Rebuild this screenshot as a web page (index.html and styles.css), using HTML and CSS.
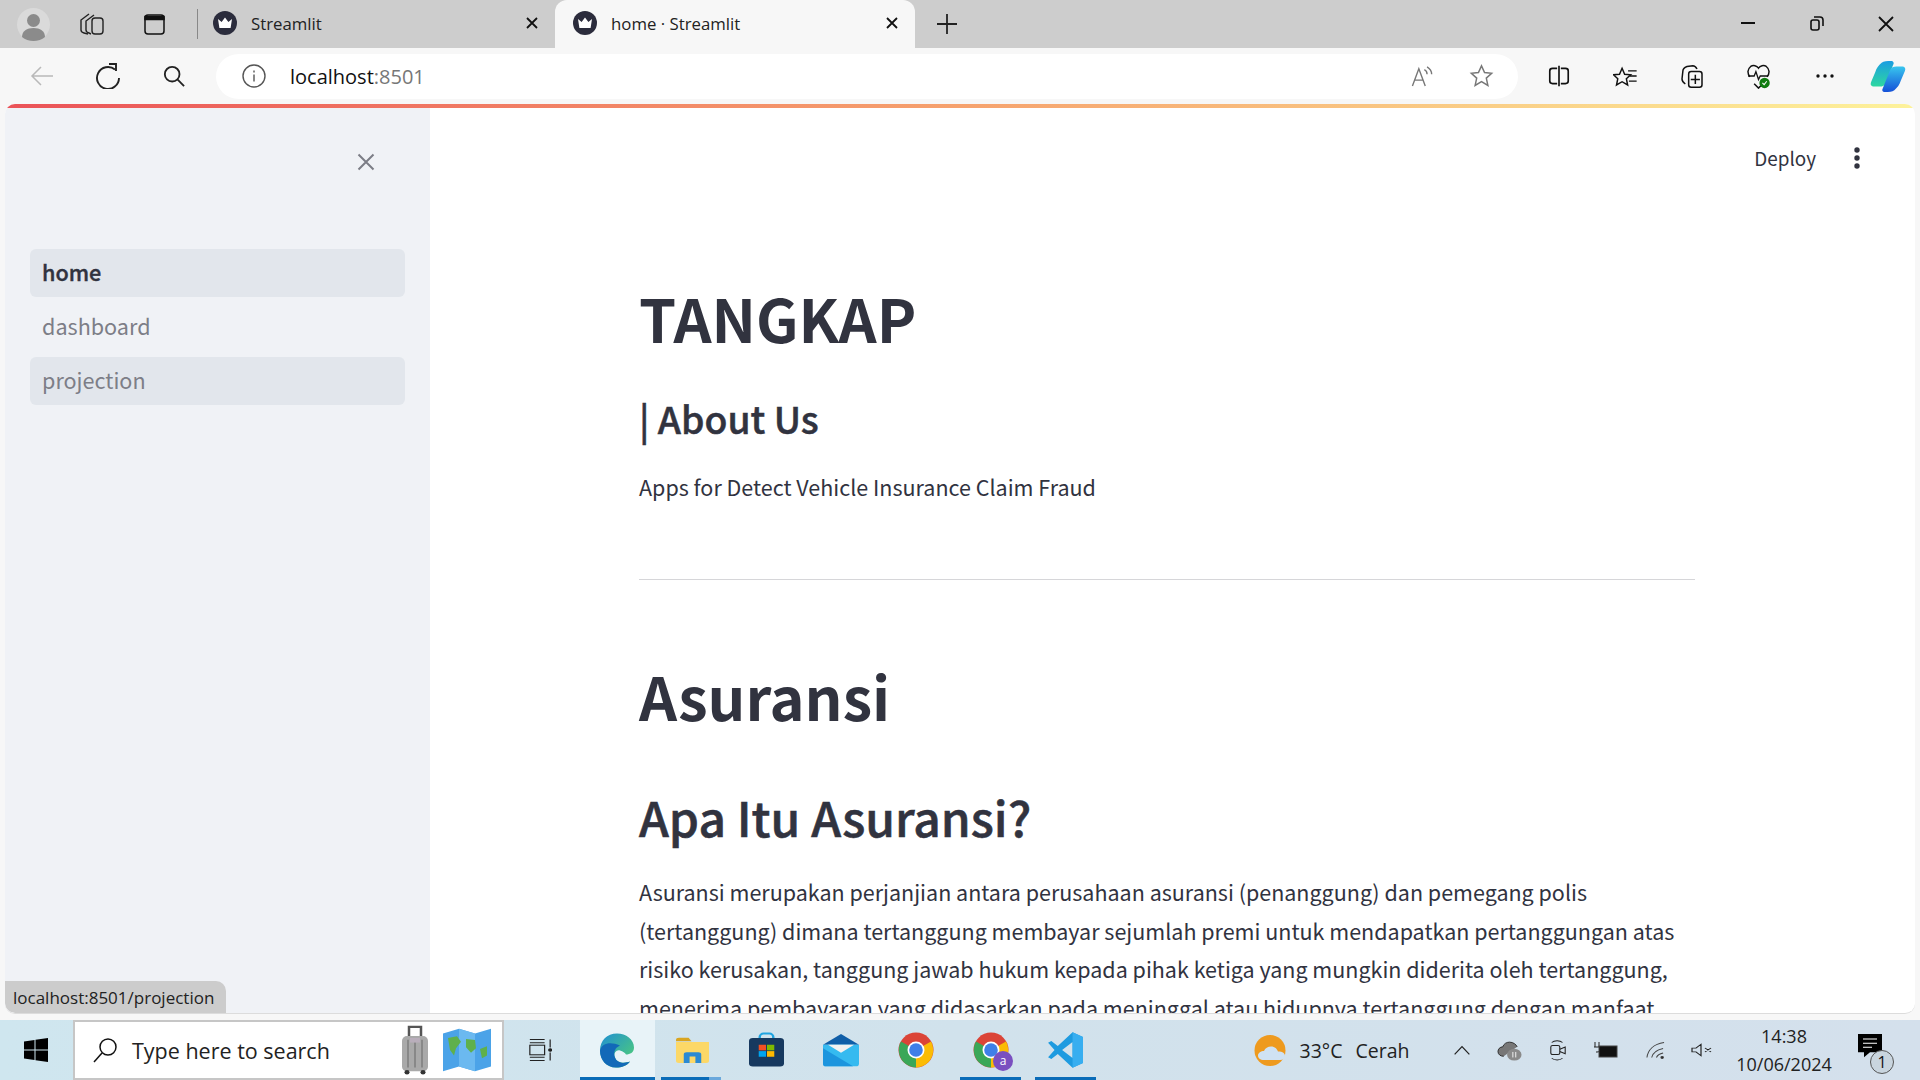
FILE: index.html
```html
<!DOCTYPE html>
<html lang="en">
<head>
    <meta charset="UTF-8">
    <meta name="viewport" content="width=device-width, initial-scale=1.0">
    <title>home · Streamlit</title>
    <link rel="stylesheet" href="styles.css">
</head>
<body>
    <svg class="defs" width="0" height="0">
        <symbol id="favicon" viewBox="0 0 24 24">
            <circle cx="12" cy="12" r="12" fill="#2b2c3c"/>
            <path d="M5 8l3.600 3L12 6.500 15.400 11 19 8l-1.400 9H6.400z" fill="#fff"/>
        </symbol>
        <symbol id="chrome" viewBox="0 0 36 36">
            <circle cx="18" cy="18" r="17.500" fill="#db4437"/>
            <path d="M18 18L33 9.500A17.500 17.500 0 0 1 18 35.500z" fill="#fbbc05"/>
            <path d="M18 18L18 35.500A17.500 17.500 0 0 1 3 9.500z" fill="#3aa757"/>
            <circle cx="18" cy="18" r="8.500" fill="#fff"/>
            <circle cx="18" cy="18" r="6.800" fill="#3f7fe8"/>
        </symbol>
    </svg>

    <!-- Browser tab strip -->
    <div class="tabstrip">
        <div class="strip-btn avatar">
            <svg width="33" height="33" viewBox="0 0 33 33"><circle cx="16.500" cy="16.500" r="16.500" fill="#dadada"/><circle cx="16.500" cy="12.500" r="6.500" fill="#8b8b8b"/><path d="M5 29c0-6 5-9 11.500-9S28 23 28 29c-3 2.500-7 4-11.500 4S8 31.500 5 29z" fill="#8b8b8b"/></svg>
        </div>
        <div class="strip-btn workspaces">
            <svg width="26" height="22" viewBox="0 0 26 22" fill="none" stroke="#222" stroke-width="1.400"><path d="M9 21l-4-1c-2-.5-3-2-3-3V7l8-6"/><path d="M12 21l-2-1c-2-.5-3-2-3-3V8l8-6"/><rect x="13" y="5" width="11" height="16" rx="3"/></svg>
        </div>
        <div class="strip-btn tabs-btn">
            <svg width="21" height="21" viewBox="0 0 21 21" fill="none" stroke="#111" stroke-width="1.500"><rect x="1" y="1" width="19" height="19" rx="3"/><path d="M1 2.500h19v3H1z" fill="#111"/></svg>
        </div>
        <div class="strip-divider"></div>
        <div class="tab">
            <svg class="favicon" width="24" height="24"><use href="#favicon"/></svg>
            <span class="tab-title">Streamlit</span>
            <svg class="tab-close" width="14" height="14" viewBox="0 0 14 14" stroke="#111" stroke-width="1.800"><path d="M2 2l10 10M12 2L2 12"/></svg>
        </div>
        <div class="tab active">
            <svg class="favicon" width="24" height="24"><use href="#favicon"/></svg>
            <span class="tab-title">home · Streamlit</span>
            <svg class="tab-close" width="14" height="14" viewBox="0 0 14 14" stroke="#111" stroke-width="1.800"><path d="M2 2l10 10M12 2L2 12"/></svg>
        </div>
        <div class="strip-btn newtab">
            <svg width="22" height="22" viewBox="0 0 22 22" stroke="#222" stroke-width="1.800"><path d="M11 1v20M1 11h20"/></svg>
        </div>
        <div class="window-controls">
            <div class="win-btn"><svg width="16" height="16" viewBox="0 0 16 16" stroke="#111" stroke-width="2"><path d="M1 8h14"/></svg></div>
            <div class="win-btn"><svg width="16" height="16" viewBox="0 0 16 16" fill="none" stroke="#111" stroke-width="1.600"><rect x="2" y="5" width="8" height="10" rx="2"/><path d="M5 2h6c2 0 3 1 3 3v6"/></svg></div>
            <div class="win-btn"><svg width="18" height="18" viewBox="0 0 18 18" stroke="#111" stroke-width="1.800"><path d="M2 2l14 14M16 2L2 16"/></svg></div>
        </div>
    </div>

    <!-- Address bar row -->
    <div class="toolbar">
        <div class="tool-btn first">
            <svg width="24" height="22" viewBox="0 0 24 22" fill="none" stroke="#b9b9b9" stroke-width="1.500"><path d="M23 11H2M11 2l-9 9 9 9"/></svg>
        </div>
        <div class="tool-btn reload">
            <svg width="26" height="26" viewBox="0 0 26 26" fill="none" stroke="#222" stroke-width="1.900"><path d="M20 6.500A11 11 0 1 0 24 15"/><path d="M14 1h7v7"/></svg>
        </div>
        <div class="tool-btn zoom">
            <svg width="22" height="22" viewBox="0 0 24 24" fill="none" stroke="#222" stroke-width="2"><circle cx="10" cy="10" r="8"/><path d="M16 16l7 7"/></svg>
        </div>
        <div class="addressbar">
            <svg class="info" width="24" height="24" viewBox="0 0 24 24" fill="none" stroke="#555" stroke-width="1.400"><circle cx="12" cy="12" r="11"/><path d="M12 10.500v7M12 6.500v2"/></svg>
            <span class="url">localhost<span class="port">:8501</span></span>
            <svg class="read" width="25" height="22" viewBox="0 0 26 24" fill="none" stroke="#777" stroke-width="1.500"><path d="M2 23L9 4l7 19M4.500 16.500h9"/><path d="M15 5c2 1 3 3 3 5M18 2c3 2 5 5 5 8"/></svg>
            <svg class="star" width="25" height="24" viewBox="0 0 26 26" fill="none" stroke="#777" stroke-width="1.600"><path d="M13 2l3.300 7.300 7.700.8-5.800 5.200 1.700 7.900-6.900-4-6.900 4 1.700-7.900L2 10.100l7.700-.8z"/></svg>
        </div>
        <div class="tool-btn split">
            <svg width="24" height="22" viewBox="0 0 26 26" fill="none" stroke="#111" stroke-width="1.800" preserveAspectRatio="none"><path d="M11 4H6C4 4 3 5 3 7v12c0 2 1 3 3 3h5M15 4h5c2 0 3 1 3 3v12c0 2-1 3-3 3h-5M13 1v24"/></svg>
        </div>
        <div class="tool-btn">
            <svg width="25" height="24" viewBox="0 0 28 28" fill="none" stroke="#111" stroke-width="1.700"><path d="M11 2l3 7 7 .6-5 4.600 1.500 7.300-6.500-3.800-6.500 3.800 1.500-7.300-5-4.600 7-.6z" transform="translate(-1 3)"/><path d="M17 8h10M19 14h8M18 20h9"/></svg>
        </div>
        <div class="tool-btn">
            <svg width="24" height="25" viewBox="0 0 28 30" fill="none" stroke="#111" stroke-width="1.800"><rect x="10" y="9" width="16" height="19" rx="3"/><path d="M18 13v11M12.500 18.500h11"/><path d="M6 24C3 22 2 20 2 18l1-9c0-3 2-5 5-6l7-1c3 0 4 2 5 4"/></svg>
        </div>
        <div class="tool-btn">
            <svg width="25" height="26" viewBox="0 0 28 30" fill="none"><path d="M4 16C1 12 1 7 5 4c3-2 7-1 9 2 2-3 6-4 9-2 4 3 4 8 1 12M9 24l5 5 3-3" stroke="#111" stroke-width="1.700"/><path d="M2 15h7l2-5 3 9 2-4h9" stroke="#111" stroke-width="1.500"/><circle cx="21" cy="23" r="6" fill="#107c10"/><path d="M18.500 23l2 2 3-4" stroke="#fff" stroke-width="1.200"/></svg>
        </div>
        <div class="tool-btn">
            <svg width="20" height="6" viewBox="0 0 20 6" fill="#111"><circle cx="3" cy="3" r="1.700"/><circle cx="10" cy="3" r="1.700"/><circle cx="17" cy="3" r="1.700"/></svg>
        </div>
        <div class="tool-btn copilot">
            <svg width="38" height="33" viewBox="0 0 36 36" preserveAspectRatio="none">
                <defs>
                    <linearGradient id="copA" x1="0" y1="0" x2="0" y2="1"><stop offset="0" stop-color="#1b9de2"/><stop offset="1" stop-color="#2ed8a0"/></linearGradient>
                    <linearGradient id="copB" x1="0" y1="0" x2="0" y2="1"><stop offset="0" stop-color="#38c6ee"/><stop offset="1" stop-color="#1450d8"/></linearGradient>
                </defs>
                <path d="M12 3c2-2 5-2 9-2 2 0 3 2 2 4l-7 20c-1 3-3 4-6 4H5c-3 0-4-2-3-5l4-11c1-4 3-7 6-10z" fill="url(#copA)"/>
                <path d="M24 33c-2 2-5 2-9 2-2 0-3-2-2-4l7-20c1-3 3-4 6-4h5c3 0 4 2 3 5l-4 11c-1 4-3 7-6 10z" fill="url(#copB)"/>
            </svg>
        </div>
    </div>

    <!-- Streamlit page -->
    <div class="app">
        <aside class="sidebar">
            <button class="sidebar-close">
                <svg width="18" height="18" viewBox="0 0 18 18" stroke="#7c7d86" stroke-width="2"><path d="M1.500 1.500l15 15M16.500 1.500l-15 15"/></svg>
            </button>
            <nav class="nav">
                <a class="nav-item selected">home</a>
                <a class="nav-item">dashboard</a>
                <a class="nav-item hovered">projection</a>
            </nav>
        </aside>
        <main class="main">
            <div class="app-header">
                <span class="deploy">Deploy</span>
                <svg width="6" height="22" viewBox="0 0 6 22" fill="#31333f"><circle cx="3" cy="3" r="2.700"/><circle cx="3" cy="11" r="2.700"/><circle cx="3" cy="19" r="2.700"/></svg>
            </div>
            <div class="block">
                <h1 class="title">TANGKAP</h1>
                <h3 class="subtitle">| About Us</h3>
                <p class="tagline">Apps for Detect Vehicle Insurance Claim Fraud</p>
                <hr class="rule">
                <h1 class="title second">Asuransi</h1>
                <h2 class="heading">Apa Itu Asuransi?</h2>
                <p class="copy">Asuransi merupakan perjanjian antara perusahaan asuransi (penanggung) dan pemegang polis (tertanggung) dimana tertanggung membayar sejumlah premi untuk mendapatkan pertanggungan atas risiko kerusakan, tanggung jawab hukum kepada pihak ketiga yang mungkin diderita oleh tertanggung, menerima pembayaran yang didasarkan pada meninggal atau hidupnya tertanggung dengan manfaat</p>
            </div>
        </main>
        <div class="status-tip">localhost:8501/projection</div>
    </div>
    <div class="app-gap"></div>

    <!-- Windows taskbar -->
    <footer class="taskbar">
        <div class="start">
            <svg width="24" height="24" viewBox="0 0 24 24" fill="#000"><path d="M0 3.500l10.500-1.500v9.500H0zM11.500 1.800L24 0v11.500H11.500zM0 12.500h10.500V22L0 20.500zM11.500 12.500H24V24l-12.500-1.800z"/></svg>
        </div>
        <div class="searchbox">
            <svg width="26" height="26" viewBox="0 0 26 26" fill="none" stroke="#111" stroke-width="1.500"><circle cx="16" cy="10" r="8"/><path d="M10 16l-8 9"/></svg>
            <span class="search-text">Type here to search</span>
            <svg class="suitcase" width="30" height="50" viewBox="0 0 30 54" preserveAspectRatio="none">
                <path d="M9 14V2h12v12" fill="none" stroke="#555" stroke-width="2.500"/>
                <rect x="2" y="12" width="26" height="38" rx="5" fill="#a9a9a9"/>
                <path d="M8 16v30M15 16v30M22 16v30" stroke="#7d7d7d" stroke-width="1.500"/>
                <rect x="10" y="14" width="10" height="5" fill="#b9aebb"/>
                <circle cx="7" cy="51" r="2.500" fill="#333"/><circle cx="23" cy="51" r="2.500" fill="#333"/>
            </svg>
            <svg class="mapicon" width="50" height="46" viewBox="0 0 50 50" preserveAspectRatio="none">
                <path d="M1 7l16-5 16 5 16-5v41l-16 5-16-5-16 5z" fill="#4ba3e8"/>
                <path d="M17 2v41l16 5V7z" fill="#6bb9f0"/>
                <path d="M6 12l9-2 4 6-5 7-2 8-4-6zM24 13l9 1 1 9-5 5-5-6zM38 24l7-3v10l-5 3z" fill="#5fb04c"/>
            </svg>
        </div>
        <div class="taskview">
            <svg width="24" height="24" viewBox="0 0 26 30" fill="none" stroke="#222" stroke-width="1.300" preserveAspectRatio="none"><path d="M2 2h16M2 6h16M2 24h16M2 28h16"/><rect x="2" y="9" width="16" height="12"/><path d="M24 2v10M24 18v10"/><circle cx="24" cy="15" r="1.600" fill="#222"/></svg>
        </div>
        <div class="pin open focused">
            <svg width="36" height="37" viewBox="0 0 36 36">
                <defs>
                    <linearGradient id="edgeA" x1="0" y1="0" x2="1" y2="1"><stop offset="0" stop-color="#1f8fd4"/><stop offset="1" stop-color="#54d36f"/></linearGradient>
                </defs>
                <path d="M18 1C8 1 1 8 1 18c0 10 7 17 16 17 6 0 11-2 14-6-5 2-13 2-15-4-2-5 2-8 5-7s5 2 6 4c4 0 8-2 8-7C35 7 27 1 18 1z" fill="url(#edgeA)"/>
                <path d="M1 18C1 27 7 35 17 35c6 0 11-2 14-6-5 2-13 2-15-4-2-5 0-10 5-12C12 9 3 10 1 18z" fill="#1269b8"/>
            </svg>
        </div>
        <div class="pin open stacked">
            <svg width="33" height="26" viewBox="0 0 34 36" preserveAspectRatio="none">
                <path d="M0 4c0-2 1-3 3-3h10l3 5H0z" fill="#d9a520"/>
                <path d="M0 7h34v26c0 2-1 3-3 3H3c-2 0-3-1-3-3z" fill="#fcd867"/>
                <path d="M8 36V24c0-2 1-3 3-3h12c2 0 3 1 3 3v12h-6V27h-6v9z" fill="#2a8ad4"/>
            </svg>
        </div>
        <div class="pin">
            <svg width="35" height="36" viewBox="0 0 36 48" preserveAspectRatio="none">
                <path d="M11 14V7c0-3 2-5 4-5h6c2 0 4 2 4 5v7" fill="none" stroke="#1fa4e0" stroke-width="2.500"/>
                <rect x="0" y="8" width="36" height="38" rx="4" fill="#17395f"/>
                <rect x="10" y="17" width="7.500" height="7.500" fill="#f25022"/><rect x="18.500" y="17" width="7.500" height="7.500" fill="#7fba00"/>
                <rect x="10" y="25.500" width="7.500" height="7.500" fill="#00a4ef"/><rect x="18.500" y="25.500" width="7.500" height="7.500" fill="#ffb900"/>
            </svg>
        </div>
        <div class="pin">
            <svg width="36" height="33" viewBox="0 0 36 46" preserveAspectRatio="none">
                <path d="M18 0L36 15H0z" fill="#0f5ea8"/>
                <path d="M0 15h36v26c0 3-1 4-3 4H3c-2 0-3-1-3-4z" fill="#35baf0"/>
                <path d="M5 15h26l-13 11z" fill="#f1f1f1"/>
                <path d="M0 20l30 25H3c-2 0-3-1-3-4z" fill="#1c95de"/>
            </svg>
        </div>
        <div class="pin">
            <svg width="36" height="36"><use href="#chrome"/></svg>
        </div>
        <div class="pin open profile">
            <svg width="36" height="36"><use href="#chrome"/></svg>
            <span class="profile-badge">a</span>
        </div>
        <div class="pin open">
            <svg width="36" height="36" viewBox="0 0 100 100">
                <path d="M71 1L30 39 12 25 3 30l18 20L3 70l9 5 18-14 41 38 29-13V14zM71 28v44L42 50z" fill="#1e9be0" fill-rule="evenodd"/>
                <path d="M71 1l29 13v72L71 99z" fill="#37aef0"/>
            </svg>
        </div>

        <div class="tray">
            <div class="weather">
                <svg width="32" height="31" viewBox="0 0 32 31">
                    <circle cx="16" cy="15.500" r="15.500" fill="#ee9a1e"/>
                    <path d="M10 25c-4 0-6-2-6-4.500s3-4.500 6-4.500c1-3 4-4.500 7-4.500 4 0 6 2.500 7 5 5 0 7 2 7 4.500s-2 4-5 4z" fill="#cfe2f3"/>
                </svg>
                <span class="temp">33°C</span>
                <span class="cond">Cerah</span>
            </div>
            <svg class="tray-chevron" width="18" height="11" viewBox="0 0 22 14" fill="none" stroke="#222" stroke-width="1.500" preserveAspectRatio="none"><path d="M2 12l9-10 9 10"/></svg>
            <svg class="tray-cloud" width="25" height="22" viewBox="0 0 26 28" preserveAspectRatio="none"><path d="M7 22c-3 0-6-2-6-6 0-3 2-6 5-6 1-4 4-6 7-6 4 0 7 3 8 6" fill="#777" stroke="#222"/><circle cx="18" cy="20" r="7.500" fill="#8a8a8a"/><path d="M16.500 16.500v7M19.500 16.500v7" stroke="#fff"/></svg>
            <svg class="tray-meet" width="18" height="24" viewBox="0 0 20 32" fill="none" stroke="#222" stroke-width="1.200" preserveAspectRatio="none"><rect x="2" y="10" width="10" height="12" rx="2"/><path d="M12 15l6-3v9l-6-3M3 6c3-3 9-3 12 0M3 27c3 3 9 3 12 0"/></svg>
            <svg class="tray-battery" width="25" height="16" viewBox="0 0 25 16"><path d="M2 0v5M6 0v5M1 5h6v3c0 1-1 2-3 2H3" stroke="#222" fill="none"/><rect x="6" y="4" width="18" height="11" fill="#111" stroke="#444"/></svg>
            <svg class="tray-wifi" width="19" height="18" viewBox="0 0 20 24" fill="none" stroke="#444" stroke-width="1.100" preserveAspectRatio="none"><path d="M1 22C2 12 8 4 19 2M6 22c1-6 5-10 12-12M11 22c1-3 3-5 7-6"/><circle cx="17" cy="22" r="1.300" fill="#222"/></svg>
            <svg class="tray-volume" width="22" height="14" viewBox="0 0 22 22" fill="none" stroke="#222" stroke-width="1.200" preserveAspectRatio="none"><path d="M1 8h4l5-6v18l-5-6H1zM14 8l6 6M20 8l-6 6"/></svg>
            <div class="clock">
                <span>14:38</span>
                <span>10/06/2024</span>
            </div>
            <div class="notify">
                <svg width="24" height="25" viewBox="0 0 24 30" preserveAspectRatio="none"><path d="M0 0h24v22H12l-6 6v-6H0z" fill="#000"/><path d="M5 6h14M5 11h14M5 16h9" stroke="#fff" stroke-width="1.200"/></svg>
                <span class="notify-count">1</span>
            </div>
        </div>
    </footer>
</body>
</html>
```

FILE: styles.css
```css
* {
    box-sizing: border-box;
}
html, body {
    height: 100%;
}
body {
    margin: 0;
    width: 1920px;
    height: 1080px;
    overflow: hidden;
    display: flex;
    flex-direction: column;
    background-color: #f7f7f7;
    font-family: "Open Sans", "Noto Sans", sans-serif;
    color: #111;
}
.defs {
    position: absolute;
}

/* tab strip */
.tabstrip {
    height: 48px;
    flex: none;
    display: flex;
    align-items: center;
    background-color: #cdcdcd;
}
.strip-btn {
    display: flex;
    align-items: center;
    justify-content: center;
    flex: none;
}
.avatar {
    width: 33px;
    margin-left: 17px;
}
.workspaces {
    width: 26px;
    margin-left: 29px;
}
.tabs-btn {
    width: 21px;
    margin-left: 39px;
}
.strip-divider {
    width: 1px;
    height: 30px;
    margin-left: 32px;
    background-color: #888;
}
.tab {
    width: 357px;
    height: 46px;
    margin-top: -2px;
    display: flex;
    align-items: center;
    padding: 0 16px 0 15px;
    font-size: 16.800px;
    color: #222;
}
.tab.active {
    width: 360px;
    height: 48px;
    padding-left: 18px;
    padding-right: 16px;
    margin-top: 0;
    padding-bottom: 2px;
    background-color: #f7f7f7;
    border-radius: 12px 12px 0 0;
}
.tab-title {
    flex: 1;
    margin-left: 14px;
}
.newtab {
    width: 22px;
    margin-left: 21px;
}
.window-controls {
    display: flex;
    margin-left: auto;
    padding-right: 0;
}
.win-btn {
    width: 69px;
    display: flex;
    justify-content: center;
}

/* address bar row */
.toolbar {
    height: 56px;
    flex: none;
    display: flex;
    align-items: center;
    background-color: #f7f7f7;
}
.tool-btn {
    width: 66.500px;
    height: 44px;
    flex: none;
    display: flex;
    align-items: center;
    justify-content: center;
}
.tool-btn.first {
    width: 84px;
}
.tool-btn.reload {
    width: 48px;
}
.tool-btn.zoom {
    width: 84px;
}
.tool-btn.split {
    margin-left: 8px;
}
.tool-btn.copilot {
    width: 58px;
}
.addressbar {
    width: 1302px;
    height: 45px;
    margin-left: 0;
    padding: 0 24px 0 26px;
    display: flex;
    align-items: center;
    flex: none;
    background-color: #fff;
    border-radius: 23px;
}
.url {
    flex: 1;
    margin-left: 24px;
    font-size: 20px;
    color: #111;
}
.port {
    color: #777;
}
.star {
    margin-left: 34px;
}

/* streamlit page */
.app {
    position: relative;
    flex: none;
    height: 910px;
    margin: 0 5px 0 5px;
    display: flex;
    overflow: hidden;
    background-color: #fff;
    border-radius: 10px 10px 10px 10px;
    border-bottom: 1px solid #dcdcdc;
    font-family: "Noto Sans CJK SC", "Noto Sans", sans-serif;
    color: #31333f;
}
.app::before {
    content: "";
    position: absolute;
    top: 0;
    left: 0;
    right: 0;
    height: 4px;
    z-index: 2;
    background: linear-gradient(90deg, #eb5358, #f6a26e 50%, #fdf29b);
}
.app-gap {
    height: 6px;
    flex: none;
}
.sidebar {
    width: 425px;
    flex: none;
    display: flex;
    flex-direction: column;
    background-color: #f0f2f6;
}
.sidebar-close {
    align-self: flex-end;
    width: 18px;
    height: 18px;
    margin: 49px 55px 0 0;
    padding: 0;
    border: none;
    background: none;
}
.nav {
    display: flex;
    flex-direction: column;
    gap: 6px;
    margin: 78px 25px 0 25px;
}
.nav-item {
    height: 48px;
    padding: 0 0 3px 12px;
    display: flex;
    align-items: center;
    border-radius: 6px;
    font-size: 21.600px;
    color: #7d7e87;
}
.nav-item.selected {
    background-color: #e2e6ec;
    color: #31333f;
    font-weight: 500;
    -webkit-text-stroke: 0.4px #31333f;
}
.nav-item.hovered {
    background-color: #e2e6ec;
}
.main {
    position: relative;
    flex: 1;
    overflow: hidden;
}
.app-header {
    position: absolute;
    top: 40px;
    right: 55px;
    display: flex;
    align-items: center;
    gap: 38px;
    font-size: 18.900px;
}
.block {
    width: 1056px;
    margin-left: 209px;
    padding-top: 174px;
}
.title {
    margin: 0;
    font-size: 59.400px;
    line-height: 79px;
    font-weight: 700;
}
.subtitle {
    margin: 36px 0 0;
    font-size: 37.300px;
    line-height: 50px;
    font-weight: 500;
    -webkit-text-stroke: 0.5px #31333f;
}
.tagline {
    margin: 25px 0 0;
    font-size: 21.500px;
    line-height: 38.400px;
}
.rule {
    margin: 73px 0 0;
    border: none;
    border-top: 1px solid #d6d6d9;
}
.title.second {
    margin-top: 76px;
}
.heading {
    margin: 49px 0 0;
    font-size: 48px;
    line-height: 65px;
    font-weight: 500;
    -webkit-text-stroke: 0.6px #31333f;
}
.copy {
    margin: 24px 0 0;
    font-size: 21.500px;
    line-height: 38.400px;
}
.status-tip {
    position: absolute;
    left: 0;
    bottom: 0;
    height: 32px;
    padding: 0 12px 0 8px;
    display: flex;
    align-items: center;
    background-color: #cccccc;
    border-radius: 0 10px 0 10px;
    font-family: "Open Sans", "Noto Sans", sans-serif;
    font-size: 17px;
    color: #222;
}

/* windows taskbar */
.taskbar {
    height: 60px;
    flex: none;
    display: flex;
    align-items: center;
    background: linear-gradient(90deg, #cfe6ef, #d1e2ec 50%, #d4e0ec);
}
.start {
    width: 73px;
    display: flex;
    justify-content: center;
    padding-right: 1px;
}
.searchbox {
    width: 431px;
    height: 60px;
    flex: none;
    display: flex;
    align-items: center;
    padding: 0 10px 0 17px;
    background-color: #fff;
    border: 2px solid #c6c6c6;
}
.search-text {
    flex: 1;
    margin-left: 14px;
    font-size: 21.500px;
    color: #222;
}
.mapicon {
    margin-left: 12px;
}
.taskview {
    width: 76px;
    padding-right: 5px;
    display: flex;
    justify-content: center;
}
.pin {
    position: relative;
    width: 74.700px;
    height: 60px;
    flex: none;
    display: flex;
    align-items: center;
    justify-content: center;
}
.pin.open::after {
    content: "";
    position: absolute;
    left: 7px;
    right: 7px;
    bottom: 0;
    height: 3px;
    background-color: #0a6cb8;
}
.pin.focused {
    background-color: #e8f3f8;
}
.pin.focused::after {
    left: 0;
    right: 0;
}
.pin.stacked::after {
    left: 6px;
    right: 8px;
    background: linear-gradient(90deg, #0a6cb8 80%, #6aa8dc 80%);
}
.profile-badge {
    position: absolute;
    right: 15px;
    bottom: 9px;
    width: 20px;
    height: 20px;
    border-radius: 50%;
    background-color: #7a4fc0;
    color: #fff;
    font-size: 12px;
    text-align: center;
    line-height: 20px;
}
.tray {
    margin-left: auto;
    height: 60px;
    display: flex;
    align-items: center;
}
.weather {
    display: flex;
    align-items: center;
    font-size: 19.500px;
    color: #222;
    margin-right: 43px;
}
.temp {
    margin-left: 14px;
}
.cond {
    margin-left: 13px;
}
.tray-cloud {
    margin-left: 26.500px;
}
.tray-meet {
    margin-left: 27px;
}
.tray-battery {
    margin-left: 26px;
}
.tray-wifi {
    margin-left: 28px;
}
.tray-volume {
    margin-left: 26px;
}
.clock {
    width: 106px;
    margin-left: 18px;
    display: flex;
    flex-direction: column;
    align-items: center;
    gap: 4px;
    font-size: 18px;
    color: #222;
}
.notify {
    position: relative;
    width: 50px;
    margin-left: 9px;
    margin-right: 24px;
    height: 40px;
    padding: 4px 0 0 12px;
}
.notify-count {
    position: absolute;
    left: 24px;
    bottom: -4px;
    width: 24px;
    height: 24px;
    border: 1px solid #555;
    border-radius: 50%;
    background-color: #c9d5df;
    font-size: 16px;
    line-height: 22px;
    text-align: center;
}
```
